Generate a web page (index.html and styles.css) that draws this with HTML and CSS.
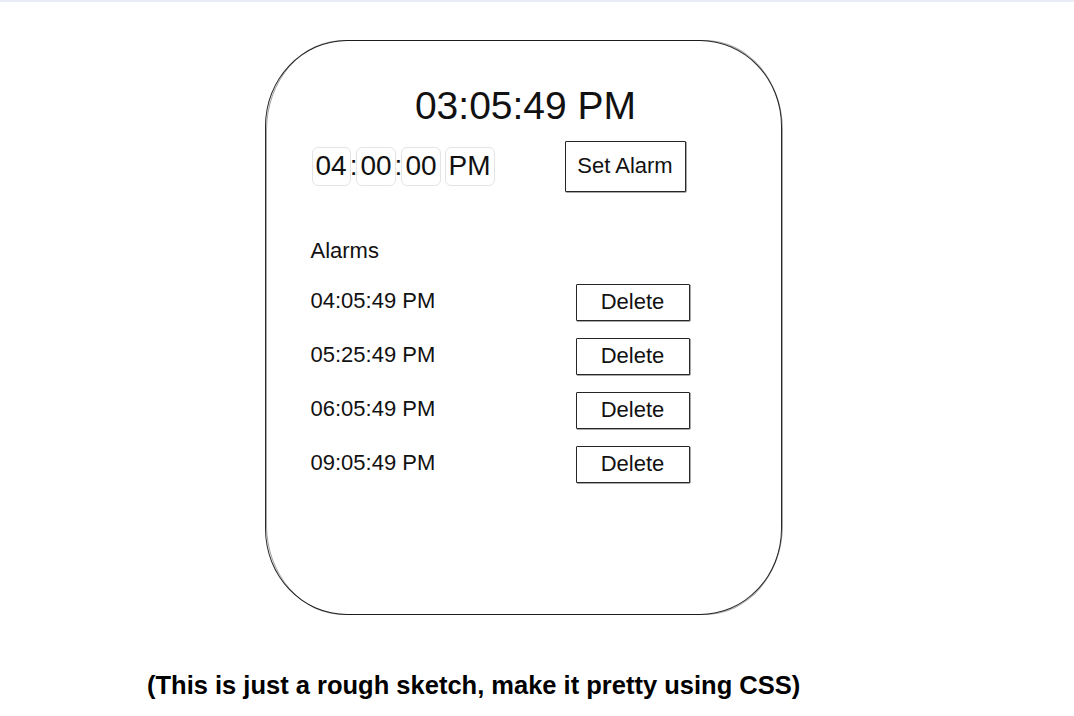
FILE: index.html
```html
<!DOCTYPE html>
<html lang="en">
<head>
<meta charset="utf-8">
<title>Alarm Clock</title>
<link rel="stylesheet" href="styles.css">
</head>
<body>
  <div class="topbar"></div>
  <main class="stage">
    <section class="card">
      <h1 class="clock">03:05:49 PM</h1>
      <div class="controls">
        <div class="setter">
          <div class="time-input">
            <span class="field">04</span><span class="colon">:</span><span class="field">00</span><span class="colon">:</span><span class="field">00</span><span class="field ampm">PM</span>
          </div>
          <button class="btn btn-set">Set Alarm</button>
        </div>
        <h2 class="alarms-title">Alarms</h2>
        <ul class="alarm-list">
          <li class="alarm"><span class="alarm-time">04:05:49 PM</span><button class="btn btn-delete">Delete</button></li>
          <li class="alarm"><span class="alarm-time">05:25:49 PM</span><button class="btn btn-delete">Delete</button></li>
          <li class="alarm"><span class="alarm-time">06:05:49 PM</span><button class="btn btn-delete">Delete</button></li>
          <li class="alarm"><span class="alarm-time">09:05:49 PM</span><button class="btn btn-delete">Delete</button></li>
        </ul>
      </div>
    </section>
    <p class="note">(This is just a rough sketch, make it pretty using CSS)</p>
  </main>
</body>
</html>
```

FILE: styles.css
```css
* {
  box-sizing: border-box;
}

html, body {
  margin: 0;
  padding: 0;
  background: #ffffff;
  color: #111111;
  font-family: "Liberation Sans", Arial, sans-serif;
}

.topbar {
  height: 2px;
  background: #e9ecf7;
}

.stage {
  display: flex;
  flex-direction: column;
  padding-top: 38px;
}

.card {
  position: relative;
  margin-left: 265px;
  width: 517px;
  height: 575px;
  border: 1.5px solid #2b2b2b;
  border-radius: 82px / 86px;
  padding: 42px 0 0 0;
  background: #ffffff;
}

.card::after {
  content: "";
  position: absolute;
  top: -1px;
  left: 0;
  right: -2px;
  bottom: -1px;
  border: 1px solid rgba(0, 0, 0, 0.35);
  border-radius: 78px / 90px;
  pointer-events: none;
}

.clock {
  margin: 0;
  font-size: 39px;
  line-height: 46px;
  font-weight: 400;
  text-align: center;
  padding-left: 4px;
}

.controls {
  margin: 11.5px 0 0 44.5px;
  width: 379px;
}

.setter {
  display: flex;
  align-items: center;
  justify-content: space-between;
  width: 375px;
  height: 51px;
}

.time-input {
  display: flex;
  align-items: center;
  margin-left: 1px;
  font-size: 28px;
}

.field {
  display: inline-flex;
  align-items: center;
  height: 39px;
  padding: 0 3px;
  border: 1px solid #e4e4e4;
  border-radius: 6px;
  line-height: 1;
}

.colon {
  margin: 0 -1px;
  line-height: 1;
}

.ampm {
  margin-left: 4px;
}

.btn {
  font-family: "Liberation Sans", Arial, sans-serif;
  font-size: 22px;
  color: #111111;
  background: #ffffff;
  border: 1.5px solid #262626;
  border-radius: 1px;
  padding: 0;
  box-shadow: 0.5px 0.5px 0 #555555;
}

.btn-set {
  width: 121px;
  height: 51px;
}

.alarms-title {
  margin: 46px 0 0 0;
  font-size: 22px;
  line-height: 26px;
  font-weight: 400;
}

.alarm-list {
  list-style: none;
  margin: 20px 0 0 0;
  padding: 0;
  display: flex;
  flex-direction: column;
  gap: 17px;
}

.alarm {
  display: flex;
  align-items: center;
  justify-content: space-between;
  height: 37px;
}

.alarm-time {
  font-size: 22px;
  line-height: 26px;
  margin-top: -3px;
}

.btn-delete {
  width: 114px;
  height: 37px;
}

.note {
  margin: 55px 0 0 147px;
  font-size: 25.5px;
  line-height: 30px;
  font-weight: 700;
  color: #000000;
}
```
